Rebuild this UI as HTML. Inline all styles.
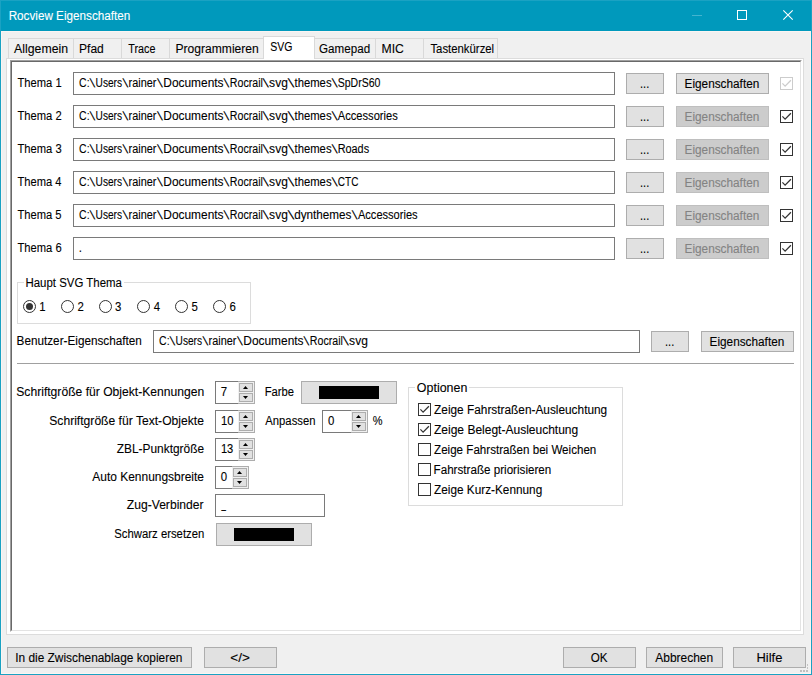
<!DOCTYPE html><html lang="de"><head><meta charset="utf-8"><title>Rocview Eigenschaften</title><style>

html,body{margin:0;padding:0}
body{width:812px;height:675px;overflow:hidden;background:#F0F0F0;position:relative;
font-family:"Liberation Sans",sans-serif;font-size:12px}
.b{position:absolute;display:block}
.t{position:absolute;white-space:pre;line-height:14px;transform-origin:0 0;font-size:12px;-webkit-text-stroke:0.1px currentColor}

</style></head><body>
<div class="b" style="left:0px;top:0px;width:812px;height:31px;background:#0099BC;"></div>
<div class="b" style="left:0px;top:0px;width:1px;height:675px;background:#1AA2C3;"></div>
<div class="b" style="left:811px;top:0px;width:1px;height:675px;background:#1AA2C3;"></div>
<div class="b" style="left:0px;top:674px;width:812px;height:1px;background:#1AA2C3;"></div>
<div class="b" style="left:0px;top:0px;width:812px;height:1px;background:#1AA2C3;"></div>
<div class="b" style="left:1px;top:31px;width:1px;height:643px;background:#FAF5F3;"></div>
<div class="b" style="left:810px;top:31px;width:1px;height:643px;background:#FAF5F3;"></div>
<div class="b" style="left:1px;top:673px;width:810px;height:1px;background:#FAF5F3;"></div>
<div class="b" style="left:1px;top:31px;width:810px;height:1px;background:#FAF5F3;"></div>
<svg class="b" style="left:680px;top:0" width="132" height="31" viewBox="0 0 132 31"><path d="M12 15.5 H22" stroke="#44B4CF" stroke-width="1"/><rect x="57.5" y="10.5" width="9" height="9" fill="none" stroke="#fff" stroke-width="1"/><path d="M103.3 10.3 L112.7 19.7 M112.7 10.3 L103.3 19.7" stroke="#fff" stroke-width="1.1"/></svg>
<div class="b" style="left:8px;top:38px;width:255px;height:1px;background:#D9D9D9;"></div>
<div class="b" style="left:314px;top:38px;width:184px;height:1px;background:#D9D9D9;"></div>
<div class="b" style="left:8px;top:38px;width:1px;height:20px;background:#D9D9D9;"></div>
<div class="b" style="left:73px;top:38px;width:1px;height:20px;background:#D9D9D9;"></div>
<div class="b" style="left:121px;top:38px;width:1px;height:20px;background:#D9D9D9;"></div>
<div class="b" style="left:169px;top:38px;width:1px;height:20px;background:#D9D9D9;"></div>
<div class="b" style="left:375px;top:38px;width:1px;height:20px;background:#D9D9D9;"></div>
<div class="b" style="left:423px;top:38px;width:1px;height:20px;background:#D9D9D9;"></div>
<div class="b" style="left:497px;top:38px;width:1px;height:20px;background:#D9D9D9;"></div>
<div class="b" style="left:6px;top:58px;width:798px;height:577px;background:#fff;border:1px solid #DCDCDC;box-sizing:border-box;"></div>
<div class="b" style="left:263px;top:36px;width:52px;height:23px;background:#fff;border:1px solid #D9D9D9;box-sizing:border-box;border-bottom:none;"></div>
<div class="b" style="left:10px;top:60px;width:792px;height:572px;background:#fff;box-sizing:border-box;border-top:1px solid #A0A0A0;border-left:1px solid #A0A0A0;border-right:1px solid #fff;border-bottom:1px solid #fff;"></div>
<div class="b" style="left:11px;top:61px;width:790px;height:570px;background:#fff;box-sizing:border-box;border-top:1px solid #696969;border-left:1px solid #696969;border-right:1px solid #E3E3E3;border-bottom:1px solid #E3E3E3;"></div>
<div class="b" style="left:73px;top:72px;width:542px;height:23px;background:#fff;border:1px solid #7A7A7A;box-sizing:border-box;"></div>
<div class="b" style="left:626px;top:73px;width:38px;height:21px;background:#E1E1E1;border:1px solid #ADADAD;box-sizing:border-box;"></div>
<div class="b" style="left:676px;top:73px;width:93px;height:21px;background:#E1E1E1;border:1px solid #ADADAD;box-sizing:border-box;"></div>
<svg class="b" style="left:780px;top:77px" width="13" height="13" viewBox="0 0 13 13"><rect x="0.5" y="0.5" width="12" height="12" fill="#fff" stroke="#CCCCCC" stroke-width="1"/><path d="M2.4 6.4 L5.1 9.1 L10.9 3.3" fill="none" stroke="#CCCCCC" stroke-width="1.25"/></svg>
<div class="b" style="left:73px;top:105px;width:542px;height:23px;background:#fff;border:1px solid #7A7A7A;box-sizing:border-box;"></div>
<div class="b" style="left:626px;top:106px;width:38px;height:21px;background:#E1E1E1;border:1px solid #ADADAD;box-sizing:border-box;"></div>
<div class="b" style="left:676px;top:106px;width:93px;height:21px;background:#CCCCCC;border:1px solid #BFBFBF;box-sizing:border-box;"></div>
<svg class="b" style="left:780px;top:110px" width="13" height="13" viewBox="0 0 13 13"><rect x="0.5" y="0.5" width="12" height="12" fill="#fff" stroke="#333333" stroke-width="1"/><path d="M2.4 6.4 L5.1 9.1 L10.9 3.3" fill="none" stroke="#333333" stroke-width="1.25"/></svg>
<div class="b" style="left:73px;top:138px;width:542px;height:23px;background:#fff;border:1px solid #7A7A7A;box-sizing:border-box;"></div>
<div class="b" style="left:626px;top:139px;width:38px;height:21px;background:#E1E1E1;border:1px solid #ADADAD;box-sizing:border-box;"></div>
<div class="b" style="left:676px;top:139px;width:93px;height:21px;background:#CCCCCC;border:1px solid #BFBFBF;box-sizing:border-box;"></div>
<svg class="b" style="left:780px;top:143px" width="13" height="13" viewBox="0 0 13 13"><rect x="0.5" y="0.5" width="12" height="12" fill="#fff" stroke="#333333" stroke-width="1"/><path d="M2.4 6.4 L5.1 9.1 L10.9 3.3" fill="none" stroke="#333333" stroke-width="1.25"/></svg>
<div class="b" style="left:73px;top:171px;width:542px;height:23px;background:#fff;border:1px solid #7A7A7A;box-sizing:border-box;"></div>
<div class="b" style="left:626px;top:172px;width:38px;height:21px;background:#E1E1E1;border:1px solid #ADADAD;box-sizing:border-box;"></div>
<div class="b" style="left:676px;top:172px;width:93px;height:21px;background:#CCCCCC;border:1px solid #BFBFBF;box-sizing:border-box;"></div>
<svg class="b" style="left:780px;top:176px" width="13" height="13" viewBox="0 0 13 13"><rect x="0.5" y="0.5" width="12" height="12" fill="#fff" stroke="#333333" stroke-width="1"/><path d="M2.4 6.4 L5.1 9.1 L10.9 3.3" fill="none" stroke="#333333" stroke-width="1.25"/></svg>
<div class="b" style="left:73px;top:204px;width:542px;height:23px;background:#fff;border:1px solid #7A7A7A;box-sizing:border-box;"></div>
<div class="b" style="left:626px;top:205px;width:38px;height:21px;background:#E1E1E1;border:1px solid #ADADAD;box-sizing:border-box;"></div>
<div class="b" style="left:676px;top:205px;width:93px;height:21px;background:#CCCCCC;border:1px solid #BFBFBF;box-sizing:border-box;"></div>
<svg class="b" style="left:780px;top:209px" width="13" height="13" viewBox="0 0 13 13"><rect x="0.5" y="0.5" width="12" height="12" fill="#fff" stroke="#333333" stroke-width="1"/><path d="M2.4 6.4 L5.1 9.1 L10.9 3.3" fill="none" stroke="#333333" stroke-width="1.25"/></svg>
<div class="b" style="left:73px;top:237px;width:542px;height:23px;background:#fff;border:1px solid #7A7A7A;box-sizing:border-box;"></div>
<div class="b" style="left:626px;top:238px;width:38px;height:21px;background:#E1E1E1;border:1px solid #ADADAD;box-sizing:border-box;"></div>
<div class="b" style="left:676px;top:238px;width:93px;height:21px;background:#CCCCCC;border:1px solid #BFBFBF;box-sizing:border-box;"></div>
<svg class="b" style="left:780px;top:242px" width="13" height="13" viewBox="0 0 13 13"><rect x="0.5" y="0.5" width="12" height="12" fill="#fff" stroke="#333333" stroke-width="1"/><path d="M2.4 6.4 L5.1 9.1 L10.9 3.3" fill="none" stroke="#333333" stroke-width="1.25"/></svg>
<div class="b" style="left:17px;top:282px;width:234px;height:42px;border:1px solid #DCDCDC;box-sizing:border-box;"></div>
<div class="b" style="left:24px;top:278px;width:100px;height:10px;background:#fff;"></div>
<svg class="b" style="left:23px;top:300px" width="13" height="13" viewBox="0 0 13 13"><circle cx="6.5" cy="6.5" r="6" fill="#fff" stroke="#333" stroke-width="1"/><circle cx="6.5" cy="6.5" r="3.5" fill="#333"/></svg>
<svg class="b" style="left:61px;top:300px" width="13" height="13" viewBox="0 0 13 13"><circle cx="6.5" cy="6.5" r="6" fill="#fff" stroke="#333" stroke-width="1"/></svg>
<svg class="b" style="left:99px;top:300px" width="13" height="13" viewBox="0 0 13 13"><circle cx="6.5" cy="6.5" r="6" fill="#fff" stroke="#333" stroke-width="1"/></svg>
<svg class="b" style="left:137px;top:300px" width="13" height="13" viewBox="0 0 13 13"><circle cx="6.5" cy="6.5" r="6" fill="#fff" stroke="#333" stroke-width="1"/></svg>
<svg class="b" style="left:175px;top:300px" width="13" height="13" viewBox="0 0 13 13"><circle cx="6.5" cy="6.5" r="6" fill="#fff" stroke="#333" stroke-width="1"/></svg>
<svg class="b" style="left:213px;top:300px" width="13" height="13" viewBox="0 0 13 13"><circle cx="6.5" cy="6.5" r="6" fill="#fff" stroke="#333" stroke-width="1"/></svg>
<div class="b" style="left:153px;top:330px;width:487px;height:23px;background:#fff;border:1px solid #7A7A7A;box-sizing:border-box;"></div>
<div class="b" style="left:651px;top:331px;width:38px;height:21px;background:#E1E1E1;border:1px solid #ADADAD;box-sizing:border-box;"></div>
<div class="b" style="left:701px;top:331px;width:93px;height:21px;background:#E1E1E1;border:1px solid #ADADAD;box-sizing:border-box;"></div>
<div class="b" style="left:17px;top:363px;width:777px;height:1px;background:#A0A0A0;"></div>
<div class="b" style="left:215px;top:381px;width:24px;height:23px;background:#fff;border:1px solid #7A7A7A;box-sizing:border-box;border-right:none;"></div>
<div class="b" style="left:238px;top:381px;width:17px;height:23px;background:#F0F0F0;border:1px solid #ADADAD;box-sizing:border-box;border-left:none;"></div>
<div class="b" style="left:239px;top:383px;width:14px;height:9px;background:#E1E1E1;border:1px solid #ADADAD;box-sizing:border-box;"></div>
<div class="b" style="left:239px;top:393px;width:14px;height:9px;background:#E1E1E1;border:1px solid #ADADAD;box-sizing:border-box;"></div>
<svg class="b" style="left:239px;top:383px" width="14" height="19" viewBox="0 0 14 19"><path d="M4 6 L6.5 3 L9 6 Z" fill="#000"/><path d="M4 13 L6.5 16 L9 13 Z" fill="#000"/></svg>
<div class="b" style="left:215px;top:410px;width:24px;height:23px;background:#fff;border:1px solid #7A7A7A;box-sizing:border-box;border-right:none;"></div>
<div class="b" style="left:238px;top:410px;width:17px;height:23px;background:#F0F0F0;border:1px solid #ADADAD;box-sizing:border-box;border-left:none;"></div>
<div class="b" style="left:239px;top:412px;width:14px;height:9px;background:#E1E1E1;border:1px solid #ADADAD;box-sizing:border-box;"></div>
<div class="b" style="left:239px;top:422px;width:14px;height:9px;background:#E1E1E1;border:1px solid #ADADAD;box-sizing:border-box;"></div>
<svg class="b" style="left:239px;top:412px" width="14" height="19" viewBox="0 0 14 19"><path d="M4 6 L6.5 3 L9 6 Z" fill="#000"/><path d="M4 13 L6.5 16 L9 13 Z" fill="#000"/></svg>
<div class="b" style="left:215px;top:438px;width:24px;height:23px;background:#fff;border:1px solid #7A7A7A;box-sizing:border-box;border-right:none;"></div>
<div class="b" style="left:238px;top:438px;width:17px;height:23px;background:#F0F0F0;border:1px solid #ADADAD;box-sizing:border-box;border-left:none;"></div>
<div class="b" style="left:239px;top:440px;width:14px;height:9px;background:#E1E1E1;border:1px solid #ADADAD;box-sizing:border-box;"></div>
<div class="b" style="left:239px;top:450px;width:14px;height:9px;background:#E1E1E1;border:1px solid #ADADAD;box-sizing:border-box;"></div>
<svg class="b" style="left:239px;top:440px" width="14" height="19" viewBox="0 0 14 19"><path d="M4 6 L6.5 3 L9 6 Z" fill="#000"/><path d="M4 13 L6.5 16 L9 13 Z" fill="#000"/></svg>
<div class="b" style="left:215px;top:466px;width:18px;height:23px;background:#fff;border:1px solid #7A7A7A;box-sizing:border-box;border-right:none;"></div>
<div class="b" style="left:232px;top:466px;width:17px;height:23px;background:#F0F0F0;border:1px solid #ADADAD;box-sizing:border-box;border-left:none;"></div>
<div class="b" style="left:233px;top:468px;width:14px;height:9px;background:#E1E1E1;border:1px solid #ADADAD;box-sizing:border-box;"></div>
<div class="b" style="left:233px;top:478px;width:14px;height:9px;background:#E1E1E1;border:1px solid #ADADAD;box-sizing:border-box;"></div>
<svg class="b" style="left:233px;top:468px" width="14" height="19" viewBox="0 0 14 19"><path d="M4 6 L6.5 3 L9 6 Z" fill="#000"/><path d="M4 13 L6.5 16 L9 13 Z" fill="#000"/></svg>
<div class="b" style="left:322px;top:410px;width:30px;height:23px;background:#fff;border:1px solid #7A7A7A;box-sizing:border-box;border-right:none;"></div>
<div class="b" style="left:351px;top:410px;width:17px;height:23px;background:#F0F0F0;border:1px solid #ADADAD;box-sizing:border-box;border-left:none;"></div>
<div class="b" style="left:352px;top:412px;width:14px;height:9px;background:#E1E1E1;border:1px solid #ADADAD;box-sizing:border-box;"></div>
<div class="b" style="left:352px;top:422px;width:14px;height:9px;background:#E1E1E1;border:1px solid #ADADAD;box-sizing:border-box;"></div>
<svg class="b" style="left:352px;top:412px" width="14" height="19" viewBox="0 0 14 19"><path d="M4 6 L6.5 3 L9 6 Z" fill="#000"/><path d="M4 13 L6.5 16 L9 13 Z" fill="#000"/></svg>
<div class="b" style="left:215px;top:494px;width:110px;height:23px;background:#fff;border:1px solid #7A7A7A;box-sizing:border-box;"></div>
<div class="b" style="left:301px;top:381px;width:96px;height:23px;background:#E1E1E1;border:1px solid #ADADAD;box-sizing:border-box;"></div>
<div class="b" style="left:319px;top:386px;width:60px;height:13px;background:#000;"></div>
<div class="b" style="left:216px;top:523px;width:96px;height:23px;background:#E1E1E1;border:1px solid #ADADAD;box-sizing:border-box;"></div>
<div class="b" style="left:234px;top:528px;width:60px;height:13px;background:#000;"></div>
<div class="b" style="left:408px;top:387px;width:215px;height:119px;border:1px solid #DCDCDC;box-sizing:border-box;"></div>
<div class="b" style="left:415px;top:382px;width:54px;height:10px;background:#fff;"></div>
<svg class="b" style="left:418px;top:403px" width="13" height="13" viewBox="0 0 13 13"><rect x="0.5" y="0.5" width="12" height="12" fill="#fff" stroke="#333333" stroke-width="1"/><path d="M2.4 6.4 L5.1 9.1 L10.9 3.3" fill="none" stroke="#333333" stroke-width="1.25"/></svg>
<svg class="b" style="left:418px;top:423px" width="13" height="13" viewBox="0 0 13 13"><rect x="0.5" y="0.5" width="12" height="12" fill="#fff" stroke="#333333" stroke-width="1"/><path d="M2.4 6.4 L5.1 9.1 L10.9 3.3" fill="none" stroke="#333333" stroke-width="1.25"/></svg>
<svg class="b" style="left:418px;top:443px" width="13" height="13" viewBox="0 0 13 13"><rect x="0.5" y="0.5" width="12" height="12" fill="#fff" stroke="#333333" stroke-width="1"/></svg>
<svg class="b" style="left:418px;top:463px" width="13" height="13" viewBox="0 0 13 13"><rect x="0.5" y="0.5" width="12" height="12" fill="#fff" stroke="#333333" stroke-width="1"/></svg>
<svg class="b" style="left:418px;top:483px" width="13" height="13" viewBox="0 0 13 13"><rect x="0.5" y="0.5" width="12" height="12" fill="#fff" stroke="#333333" stroke-width="1"/></svg>
<div class="b" style="left:7px;top:647px;width:185px;height:21px;background:#E1E1E1;border:1px solid #ADADAD;box-sizing:border-box;"></div>
<div class="b" style="left:204px;top:647px;width:73px;height:21px;background:#E1E1E1;border:1px solid #ADADAD;box-sizing:border-box;"></div>
<div class="b" style="left:563px;top:647px;width:73px;height:21px;background:#E1E1E1;border:1px solid #ADADAD;box-sizing:border-box;"></div>
<div class="b" style="left:646px;top:647px;width:77px;height:21px;background:#E1E1E1;border:1px solid #ADADAD;box-sizing:border-box;"></div>
<div class="b" style="left:733px;top:647px;width:73px;height:21px;background:#E1E1E1;border:1px solid #ADADAD;box-sizing:border-box;"></div>
<div class="b" style="left:800px;top:670px;width:2px;height:2px;background:#BFBFBF;"></div>
<div class="b" style="left:803px;top:670px;width:2px;height:2px;background:#BFBFBF;"></div>
<div class="b" style="left:806px;top:670px;width:2px;height:2px;background:#BFBFBF;"></div>
<div class="b" style="left:807px;top:664px;width:1px;height:2px;background:#C4C4C4;"></div>
<div class="b" style="left:807px;top:667px;width:1px;height:2px;background:#C4C4C4;"></div>
<span class="t" style="left:0;top:9px;color:#fff;transform:translateX(8.65px) scaleX(0.9749);">Rocview Eigenschaften</span>
<span class="t" style="left:0;top:42px;color:#000;transform:translateX(14.11px) scaleX(1.0234);">Allgemein</span>
<span class="t" style="left:0;top:42px;color:#000;transform:translateX(79.00px) scaleX(1.0034);">Pfad</span>
<span class="t" style="left:0;top:42px;color:#000;transform:translateX(128.28px) scaleX(0.8962);">Trace</span>
<span class="t" style="left:0;top:42px;color:#000;transform:translateX(175.54px) scaleX(1.0068);">Programmieren</span>
<span class="t" style="left:0;top:40px;color:#000;transform:translateX(270.27px) scaleX(0.8760);">SVG</span>
<span class="t" style="left:0;top:42px;color:#000;transform:translateX(319.07px) scaleX(0.9682);">Gamepad</span>
<span class="t" style="left:0;top:42px;color:#000;transform:translateX(381.52px) scaleX(1.0186);">MIC</span>
<span class="t" style="left:0;top:42px;color:#000;transform:translateX(430.42px) scaleX(0.9459);">Tastenkürzel</span>
<span class="t" style="left:0;top:76px;color:#000;transform:translateX(17.42px) scaleX(0.9331);">Thema 1</span>
<span class="t" style="left:0;top:76px;color:#000;transform:translateX(79.12px) scaleX(0.8748);">C:</span>
<span class="t" style="left:0;top:76px;color:#000;transform:translateX(88.77px) scaleX(1.1262) skewX(12deg);">\</span>
<span class="t" style="left:0;top:76px;color:#000;transform:translateX(95.59px) scaleX(0.8442);">Users</span>
<span class="t" style="left:0;top:76px;color:#000;transform:translateX(121.72px) scaleX(1.1466) skewX(12deg);">\</span>
<span class="t" style="left:0;top:76px;color:#000;transform:translateX(128.59px) scaleX(0.9087);">rainer</span>
<span class="t" style="left:0;top:76px;color:#000;transform:translateX(156.39px) scaleX(1.1562) skewX(12deg);">\</span>
<span class="t" style="left:0;top:76px;color:#000;transform:translateX(163.29px) scaleX(0.9933);">Documents</span>
<span class="t" style="left:0;top:76px;color:#000;transform:translateX(222.72px) scaleX(1.1466) skewX(12deg);">\</span>
<span class="t" style="left:0;top:76px;color:#000;transform:translateX(229.86px) scaleX(0.8835);">Rocrail</span>
<span class="t" style="left:0;top:76px;color:#000;transform:translateX(261.91px) scaleX(1.2414) skewX(12deg);">\</span>
<span class="t" style="left:0;top:76px;color:#000;transform:translateX(269.10px) scaleX(1.0044);">svg</span>
<span class="t" style="left:0;top:76px;color:#000;transform:translateX(286.91px) scaleX(1.3132) skewX(12deg);">\</span>
<span class="t" style="left:0;top:76px;color:#000;transform:translateX(294.49px) scaleX(0.9419);">themes</span>
<span class="t" style="left:0;top:76px;color:#000;transform:translateX(330.94px) scaleX(1.2016) skewX(12deg);">\</span>
<span class="t" style="left:0;top:76px;color:#000;transform:translateX(337.76px) scaleX(0.8751);">SpDrS60</span>
<span class="t" style="left:0;top:77px;color:#000;transform:translateX(640.03px) scaleX(0.9174);">...</span>
<span class="t" style="left:0;top:77px;color:#000;transform:translateX(684.58px) scaleX(0.9820);">Eigenschaften</span>
<span class="t" style="left:0;top:109px;color:#000;transform:translateX(17.42px) scaleX(0.9344);">Thema 2</span>
<span class="t" style="left:0;top:109px;color:#000;transform:translateX(79.12px) scaleX(0.8748);">C:</span>
<span class="t" style="left:0;top:109px;color:#000;transform:translateX(88.77px) scaleX(1.1262) skewX(12deg);">\</span>
<span class="t" style="left:0;top:109px;color:#000;transform:translateX(95.59px) scaleX(0.8442);">Users</span>
<span class="t" style="left:0;top:109px;color:#000;transform:translateX(121.72px) scaleX(1.1466) skewX(12deg);">\</span>
<span class="t" style="left:0;top:109px;color:#000;transform:translateX(128.59px) scaleX(0.9087);">rainer</span>
<span class="t" style="left:0;top:109px;color:#000;transform:translateX(156.39px) scaleX(1.1562) skewX(12deg);">\</span>
<span class="t" style="left:0;top:109px;color:#000;transform:translateX(163.29px) scaleX(0.9933);">Documents</span>
<span class="t" style="left:0;top:109px;color:#000;transform:translateX(222.72px) scaleX(1.1466) skewX(12deg);">\</span>
<span class="t" style="left:0;top:109px;color:#000;transform:translateX(229.86px) scaleX(0.8835);">Rocrail</span>
<span class="t" style="left:0;top:109px;color:#000;transform:translateX(261.91px) scaleX(1.2414) skewX(12deg);">\</span>
<span class="t" style="left:0;top:109px;color:#000;transform:translateX(269.10px) scaleX(1.0044);">svg</span>
<span class="t" style="left:0;top:109px;color:#000;transform:translateX(286.91px) scaleX(1.3132) skewX(12deg);">\</span>
<span class="t" style="left:0;top:109px;color:#000;transform:translateX(294.49px) scaleX(0.9419);">themes</span>
<span class="t" style="left:0;top:109px;color:#000;transform:translateX(330.94px) scaleX(1.2016) skewX(12deg);">\</span>
<span class="t" style="left:0;top:109px;color:#000;transform:translateX(337.83px) scaleX(0.9270);">Accessories</span>
<span class="t" style="left:0;top:110px;color:#000;transform:translateX(640.03px) scaleX(0.9174);">...</span>
<span class="t" style="left:0;top:110px;color:#838383;transform:translateX(684.58px) scaleX(0.9820);">Eigenschaften</span>
<span class="t" style="left:0;top:142px;color:#000;transform:translateX(17.42px) scaleX(0.9339);">Thema 3</span>
<span class="t" style="left:0;top:142px;color:#000;transform:translateX(79.12px) scaleX(0.8748);">C:</span>
<span class="t" style="left:0;top:142px;color:#000;transform:translateX(88.77px) scaleX(1.1262) skewX(12deg);">\</span>
<span class="t" style="left:0;top:142px;color:#000;transform:translateX(95.59px) scaleX(0.8442);">Users</span>
<span class="t" style="left:0;top:142px;color:#000;transform:translateX(121.72px) scaleX(1.1466) skewX(12deg);">\</span>
<span class="t" style="left:0;top:142px;color:#000;transform:translateX(128.59px) scaleX(0.9087);">rainer</span>
<span class="t" style="left:0;top:142px;color:#000;transform:translateX(156.39px) scaleX(1.1562) skewX(12deg);">\</span>
<span class="t" style="left:0;top:142px;color:#000;transform:translateX(163.29px) scaleX(0.9933);">Documents</span>
<span class="t" style="left:0;top:142px;color:#000;transform:translateX(222.72px) scaleX(1.1466) skewX(12deg);">\</span>
<span class="t" style="left:0;top:142px;color:#000;transform:translateX(229.86px) scaleX(0.8835);">Rocrail</span>
<span class="t" style="left:0;top:142px;color:#000;transform:translateX(261.91px) scaleX(1.2414) skewX(12deg);">\</span>
<span class="t" style="left:0;top:142px;color:#000;transform:translateX(269.10px) scaleX(1.0044);">svg</span>
<span class="t" style="left:0;top:142px;color:#000;transform:translateX(286.91px) scaleX(1.3132) skewX(12deg);">\</span>
<span class="t" style="left:0;top:142px;color:#000;transform:translateX(294.49px) scaleX(0.9419);">themes</span>
<span class="t" style="left:0;top:142px;color:#000;transform:translateX(330.94px) scaleX(1.2016) skewX(12deg);">\</span>
<span class="t" style="left:0;top:142px;color:#000;transform:translateX(337.65px) scaleX(0.9059);">Roads</span>
<span class="t" style="left:0;top:143px;color:#000;transform:translateX(640.03px) scaleX(0.9174);">...</span>
<span class="t" style="left:0;top:143px;color:#838383;transform:translateX(684.58px) scaleX(0.9820);">Eigenschaften</span>
<span class="t" style="left:0;top:175px;color:#000;transform:translateX(17.42px) scaleX(0.9305);">Thema 4</span>
<span class="t" style="left:0;top:175px;color:#000;transform:translateX(79.12px) scaleX(0.8748);">C:</span>
<span class="t" style="left:0;top:175px;color:#000;transform:translateX(88.77px) scaleX(1.1262) skewX(12deg);">\</span>
<span class="t" style="left:0;top:175px;color:#000;transform:translateX(95.59px) scaleX(0.8442);">Users</span>
<span class="t" style="left:0;top:175px;color:#000;transform:translateX(121.72px) scaleX(1.1466) skewX(12deg);">\</span>
<span class="t" style="left:0;top:175px;color:#000;transform:translateX(128.59px) scaleX(0.9087);">rainer</span>
<span class="t" style="left:0;top:175px;color:#000;transform:translateX(156.39px) scaleX(1.1562) skewX(12deg);">\</span>
<span class="t" style="left:0;top:175px;color:#000;transform:translateX(163.29px) scaleX(0.9933);">Documents</span>
<span class="t" style="left:0;top:175px;color:#000;transform:translateX(222.72px) scaleX(1.1466) skewX(12deg);">\</span>
<span class="t" style="left:0;top:175px;color:#000;transform:translateX(229.86px) scaleX(0.8835);">Rocrail</span>
<span class="t" style="left:0;top:175px;color:#000;transform:translateX(261.91px) scaleX(1.2414) skewX(12deg);">\</span>
<span class="t" style="left:0;top:175px;color:#000;transform:translateX(269.10px) scaleX(1.0044);">svg</span>
<span class="t" style="left:0;top:175px;color:#000;transform:translateX(286.91px) scaleX(1.3132) skewX(12deg);">\</span>
<span class="t" style="left:0;top:175px;color:#000;transform:translateX(294.49px) scaleX(0.9419);">themes</span>
<span class="t" style="left:0;top:175px;color:#000;transform:translateX(330.94px) scaleX(1.2016) skewX(12deg);">\</span>
<span class="t" style="left:0;top:175px;color:#000;transform:translateX(337.86px) scaleX(0.8370);">CTC</span>
<span class="t" style="left:0;top:176px;color:#000;transform:translateX(640.03px) scaleX(0.9174);">...</span>
<span class="t" style="left:0;top:176px;color:#838383;transform:translateX(684.58px) scaleX(0.9820);">Eigenschaften</span>
<span class="t" style="left:0;top:208px;color:#000;transform:translateX(17.42px) scaleX(0.9328);">Thema 5</span>
<span class="t" style="left:0;top:208px;color:#000;transform:translateX(79.12px) scaleX(0.8748);">C:</span>
<span class="t" style="left:0;top:208px;color:#000;transform:translateX(88.77px) scaleX(1.1262) skewX(12deg);">\</span>
<span class="t" style="left:0;top:208px;color:#000;transform:translateX(95.59px) scaleX(0.8442);">Users</span>
<span class="t" style="left:0;top:208px;color:#000;transform:translateX(121.72px) scaleX(1.1466) skewX(12deg);">\</span>
<span class="t" style="left:0;top:208px;color:#000;transform:translateX(128.59px) scaleX(0.9087);">rainer</span>
<span class="t" style="left:0;top:208px;color:#000;transform:translateX(156.39px) scaleX(1.1562) skewX(12deg);">\</span>
<span class="t" style="left:0;top:208px;color:#000;transform:translateX(163.29px) scaleX(0.9933);">Documents</span>
<span class="t" style="left:0;top:208px;color:#000;transform:translateX(222.72px) scaleX(1.1466) skewX(12deg);">\</span>
<span class="t" style="left:0;top:208px;color:#000;transform:translateX(229.86px) scaleX(0.8835);">Rocrail</span>
<span class="t" style="left:0;top:208px;color:#000;transform:translateX(261.91px) scaleX(1.2414) skewX(12deg);">\</span>
<span class="t" style="left:0;top:208px;color:#000;transform:translateX(269.10px) scaleX(1.0044);">svg</span>
<span class="t" style="left:0;top:208px;color:#000;transform:translateX(286.91px) scaleX(1.3132) skewX(12deg);">\</span>
<span class="t" style="left:0;top:208px;color:#000;transform:translateX(294.16px) scaleX(0.9759);">dynthemes</span>
<span class="t" style="left:0;top:208px;color:#000;transform:translateX(351.10px) scaleX(1.1461) skewX(12deg);">\</span>
<span class="t" style="left:0;top:208px;color:#000;transform:translateX(357.92px) scaleX(0.9226);">Accessories</span>
<span class="t" style="left:0;top:209px;color:#000;transform:translateX(640.03px) scaleX(0.9174);">...</span>
<span class="t" style="left:0;top:209px;color:#838383;transform:translateX(684.58px) scaleX(0.9820);">Eigenschaften</span>
<span class="t" style="left:0;top:241px;color:#000;transform:translateX(17.42px) scaleX(0.9336);">Thema 6</span>
<span class="t" style="left:0;top:241px;color:#000;transform:translateX(78.72px) scaleX(0.9500);">.</span>
<span class="t" style="left:0;top:242px;color:#000;transform:translateX(640.03px) scaleX(0.9174);">...</span>
<span class="t" style="left:0;top:242px;color:#838383;transform:translateX(684.58px) scaleX(0.9820);">Eigenschaften</span>
<span class="t" style="left:0;top:276px;color:#000;transform:translateX(25.45px) scaleX(0.9534);">Haupt SVG Thema</span>
<span class="t" style="left:0;top:300px;color:#000;transform:translateX(39.14px) scaleX(0.9500);">1</span>
<span class="t" style="left:0;top:300px;color:#000;transform:translateX(77.42px) scaleX(0.9500);">2</span>
<span class="t" style="left:0;top:300px;color:#000;transform:translateX(115.08px) scaleX(0.9500);">3</span>
<span class="t" style="left:0;top:300px;color:#000;transform:translateX(153.86px) scaleX(0.9500);">4</span>
<span class="t" style="left:0;top:300px;color:#000;transform:translateX(191.45px) scaleX(0.9500);">5</span>
<span class="t" style="left:0;top:300px;color:#000;transform:translateX(229.40px) scaleX(0.9500);">6</span>
<span class="t" style="left:0;top:334px;color:#000;transform:translateX(16.55px) scaleX(0.9786);">Benutzer-Eigenschaften</span>
<span class="t" style="left:0;top:334px;color:#000;transform:translateX(159.12px) scaleX(0.8748);">C:</span>
<span class="t" style="left:0;top:334px;color:#000;transform:translateX(168.77px) scaleX(1.1262) skewX(12deg);">\</span>
<span class="t" style="left:0;top:334px;color:#000;transform:translateX(175.59px) scaleX(0.8442);">Users</span>
<span class="t" style="left:0;top:334px;color:#000;transform:translateX(201.72px) scaleX(1.1466) skewX(12deg);">\</span>
<span class="t" style="left:0;top:334px;color:#000;transform:translateX(208.59px) scaleX(0.9087);">rainer</span>
<span class="t" style="left:0;top:334px;color:#000;transform:translateX(236.39px) scaleX(1.1562) skewX(12deg);">\</span>
<span class="t" style="left:0;top:334px;color:#000;transform:translateX(243.29px) scaleX(0.9933);">Documents</span>
<span class="t" style="left:0;top:334px;color:#000;transform:translateX(302.72px) scaleX(1.1466) skewX(12deg);">\</span>
<span class="t" style="left:0;top:334px;color:#000;transform:translateX(309.86px) scaleX(0.8835);">Rocrail</span>
<span class="t" style="left:0;top:334px;color:#000;transform:translateX(341.91px) scaleX(1.2414) skewX(12deg);">\</span>
<span class="t" style="left:0;top:334px;color:#000;transform:translateX(349.10px) scaleX(1.0044);">svg</span>
<span class="t" style="left:0;top:335px;color:#000;transform:translateX(665.03px) scaleX(0.9174);">...</span>
<span class="t" style="left:0;top:335px;color:#000;transform:translateX(709.58px) scaleX(0.9820);">Eigenschaften</span>
<span class="t" style="left:0;top:385px;color:#000;transform:translateX(16.26px) scaleX(1.0104);">Schriftgröße für Objekt-Kennungen</span>
<span class="t" style="left:0;top:414px;color:#000;transform:translateX(49.27px) scaleX(1.0096);">Schriftgröße für Text-Objekte</span>
<span class="t" style="left:0;top:442px;color:#000;transform:translateX(116.81px) scaleX(0.9905);">ZBL-Punktgröße</span>
<span class="t" style="left:0;top:470px;color:#000;transform:translateX(92.32px) scaleX(0.9958);">Auto Kennungsbreite</span>
<span class="t" style="left:0;top:498px;color:#000;transform:translateX(126.81px) scaleX(1.0096);">Zug-Verbinder</span>
<span class="t" style="left:0;top:527px;color:#000;transform:translateX(114.32px) scaleX(0.9435);">Schwarz ersetzen</span>
<span class="t" style="left:0;top:385px;color:#000;transform:translateX(220.78px) scaleX(0.9500);">7</span>
<span class="t" style="left:0;top:414px;color:#000;transform:translateX(220.88px) scaleX(0.9363);">10</span>
<span class="t" style="left:0;top:442px;color:#000;transform:translateX(220.89px) scaleX(0.9293);">13</span>
<span class="t" style="left:0;top:470px;color:#000;transform:translateX(220.82px) scaleX(0.9500);">0</span>
<span class="t" style="left:0;top:385px;color:#000;transform:translateX(264.71px) scaleX(0.9355);">Farbe</span>
<span class="t" style="left:0;top:414px;color:#000;transform:translateX(265.32px) scaleX(0.9389);">Anpassen</span>
<span class="t" style="left:0;top:414px;color:#000;transform:translateX(328.02px) scaleX(0.9500);">0</span>
<span class="t" style="left:0;top:414px;color:#000;transform:translateX(372.83px) scaleX(0.9138);">%</span>
<span class="t" style="left:0;top:497px;color:#000;transform:translateX(221.55px) scaleX(0.6477);">_</span>
<span class="t" style="left:0;top:381px;color:#000;transform:translateX(416.86px) scaleX(1.0363);">Optionen</span>
<span class="t" style="left:0;top:403px;color:#000;transform:translateX(434.08px) scaleX(0.9867);">Zeige Fahrstraßen-Ausleuchtung</span>
<span class="t" style="left:0;top:423px;color:#000;transform:translateX(434.00px) scaleX(1.0009);">Zeige Belegt-Ausleuchtung</span>
<span class="t" style="left:0;top:443px;color:#000;transform:translateX(434.06px) scaleX(0.9665);">Zeige Fahrstraßen bei Weichen</span>
<span class="t" style="left:0;top:463px;color:#000;transform:translateX(433.57px) scaleX(0.9696);">Fahrstraße priorisieren</span>
<span class="t" style="left:0;top:483px;color:#000;transform:translateX(434.07px) scaleX(0.9824);">Zeige Kurz-Kennung</span>
<span class="t" style="left:0;top:651px;color:#000;transform:translateX(15.17px) scaleX(0.9906);">In die Zwischenablage kopieren</span>
<span class="t" style="left:0;top:651px;color:#000;transform:translateX(230.25px) scaleX(1.1248);">&lt;/&gt;</span>
<span class="t" style="left:0;top:651px;color:#000;transform:translateX(590.80px) scaleX(0.9684);">OK</span>
<span class="t" style="left:0;top:651px;color:#000;transform:translateX(655.30px) scaleX(0.9964);">Abbrechen</span>
<span class="t" style="left:0;top:651px;color:#000;transform:translateX(756.45px) scaleX(1.0805);">Hilfe</span>
</body></html>
